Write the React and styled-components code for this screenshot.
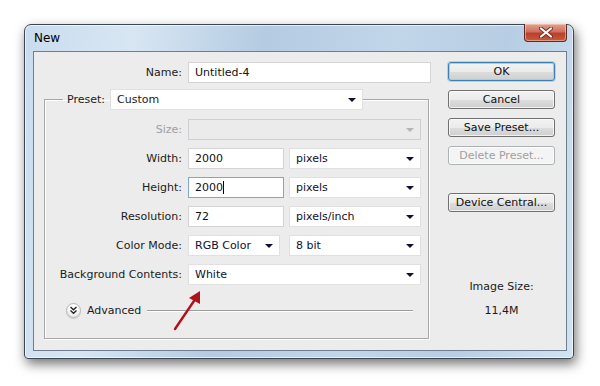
import styled, { createGlobalStyle } from "styled-components";

const GlobalStyle = createGlobalStyle`
    html, body {
        margin: 0;
        padding: 0;
        background: #FFFFFF;
    }
    body {
        font-family: "DejaVu Sans", "Liberation Sans", sans-serif;
        font-size: 11px;
        color: #1b1b1b;
    }
`

function Arrow() {
    return (
        <svg width="10" height="6" viewBox="0 0 10 6">
            <path d="M1 1 L9 1 L5 5 Z" fill="currentColor" />
        </svg>
    )
}

function Select({ value, width, disabled }) {
    return (
        <SelectBox width={width} disabled={disabled}>
            <span>{value}</span>
            <Arrow />
        </SelectBox>
    )
}

function Field({ label, children, disabled }) {
    return (
        <Row>
            <Label disabled={disabled}>{label}</Label>
            {children}
        </Row>
    )
}

export default function App() {
    return (
        <Page>
            <GlobalStyle />
            <Window>
                <TitleBar>
                    <h1>New</h1>
                    <CloseButton>
                        <svg width="14" height="11" viewBox="0 0 14 11">
                            <path d="M2 1.5 L12 9.5 M12 1.5 L2 9.5" stroke="#7a2a20" strokeWidth="4" strokeLinecap="round" />
                            <path d="M2 1.5 L12 9.5 M12 1.5 L2 9.5" stroke="#FFFFFF" strokeWidth="2.2" strokeLinecap="round" />
                        </svg>
                    </CloseButton>
                </TitleBar>

                <Client>
                    <MainColumn>
                        <Row>
                            <Label width={138}>Name:</Label>
                            <Input width={243} last>Untitled-4</Input>
                        </Row>

                        <Group>
                            <Legend>
                                <span>Preset:</span>
                                <Select value="Custom" width={253} />
                            </Legend>
                            <Rows>
                                <Field label="Size:" disabled>
                                    <Select value="" width={233} disabled />
                                </Field>
                                <Field label="Width:">
                                    <Input width={96}>2000</Input>
                                    <Select value="pixels" width={132} />
                                </Field>
                                <Field label="Height:">
                                    <Input width={96} focused>2000<Caret /></Input>
                                    <Select value="pixels" width={132} />
                                </Field>
                                <Field label="Resolution:">
                                    <Input width={96}>72</Input>
                                    <Select value="pixels/inch" width={132} />
                                </Field>
                                <Field label="Color Mode:">
                                    <Select value="RGB Color" width={92} />
                                    <Spacer />
                                    <Select value="8 bit" width={132} />
                                </Field>
                                <Field label="Background Contents:">
                                    <Select value="White" width={233} />
                                </Field>
                            </Rows>
                            <Advanced>
                                <ToggleIcon>
                                    <svg width="9" height="9" viewBox="0 0 9 9">
                                        <path d="M1.5 1 L4.5 3.8 L7.5 1 M1.5 4.5 L4.5 7.3 L7.5 4.5" stroke="#222" strokeWidth="1.4" fill="none" />
                                    </svg>
                                </ToggleIcon>
                                <span>Advanced</span>
                                <Line />
                            </Advanced>
                        </Group>
                    </MainColumn>

                    <SideColumn>
                        <Button primary>OK</Button>
                        <Button>Cancel</Button>
                        <Button>Save Preset...</Button>
                        <Button disabled>Delete Preset...</Button>
                        <Button gap={19}>Device Central...</Button>
                        <ImageSize>
                            <p>Image Size:</p>
                            <p>11,4M</p>
                        </ImageSize>
                    </SideColumn>
                </Client>

                <Pointer width="34" height="44" viewBox="0 0 34 44">
                    <path d="M3 41 L24 10" stroke="#b0121c" strokeWidth="2.4" strokeLinecap="round" />
                    <path d="M28 3 L17 10 L28 16 Z" fill="#b0121c" />
                </Pointer>
            </Window>
        </Page>
    )
}

const Page = styled.div`
    width: 600px;
    height: 386px;
    padding: 24px 0 0 24px;
    box-sizing: border-box;
`

const Window = styled.div`
    position: relative;
    width: 550px;
    height: 335px;
    box-sizing: border-box;
    padding: 0 6px 7px 8px;
    border: 1px solid #3c4650;
    border-radius: 7px 7px 4px 4px;
    background: linear-gradient(100deg, #c9dcee 0%, #d8e6f3 18%, #b4cbe2 40%, #c2d6ea 62%, #b7cde3 80%, #d2e3f2 100%);
    box-shadow: 2px 5px 12px rgba(0, 0, 0, 0.55), inset 0 0 0 1px rgba(255, 255, 255, 0.6);
    display: flex;
    flex-direction: column;
`

const TitleBar = styled.div`
    height: 26px;
    display: flex;
    align-items: flex-start;
    justify-content: space-between;

    h1 {
        margin: 6px 0 0 1px;
        font-family: "DejaVu Sans", sans-serif;
        font-size: 12px;
        font-weight: 400;
        color: #000000;
    }
`

const CloseButton = styled.div`
    width: 41px;
    height: 17px;
    margin-top: -1px;
    border: 1px solid #5b2a22;
    border-top: none;
    border-radius: 0 0 4px 4px;
    background: linear-gradient(#e0a090 0%, #d0705c 45%, #b8412c 55%, #c85a40 100%);
    box-shadow: inset 0 0 0 1px rgba(255, 220, 200, 0.5);
    display: flex;
    align-items: center;
    justify-content: center;
`

const Client = styled.div`
    flex: 1;
    border: 1px solid #6f7e8e;
    background: #ececec;
    padding: 10px 11px 0 10px;
    display: flex;
`

const MainColumn = styled.div`
    width: 387px;
    display: flex;
    flex-direction: column;
`

const Row = styled.div`
    height: 21px;
    display: flex;
    align-items: center;
`

const Label = styled.label`
    width: ${props => props.width || 137}px;
    flex-shrink: 0;
    margin-right: 6px;
    text-align: right;
    color: ${props => props.disabled ? "#a0a0a0" : "#1b1b1b"};
    white-space: nowrap;
`

const Input = styled.div`
    width: ${props => props.width}px;
    height: 21px;
    flex-shrink: 0;
    box-sizing: border-box;
    padding: 0 6px;
    display: flex;
    align-items: center;
    background: #FFFFFF;
    border: 1px solid ${props => props.focused ? "#7ea6cf" : "#d4d4d4"};
    color: #101018;
    margin-right: ${props => props.last ? 0 : 5}px;
`

const Caret = styled.span`
    width: 1px;
    height: 13px;
    background: #000000;
`

const SelectBox = styled.div`
    width: ${props => props.width}px;
    height: 21px;
    flex-shrink: 0;
    box-sizing: border-box;
    padding: 0 5px 0 6px;
    display: flex;
    align-items: center;
    justify-content: space-between;
    background: ${props => props.disabled ? "#ebebeb" : "#FFFFFF"};
    border: 1px solid ${props => props.disabled ? "#cfcfcf" : "#e0e0e0"};
    color: ${props => props.disabled ? "#b4b4b4" : "#101030"};
`

const Spacer = styled.div`
    width: 9px;
    flex-shrink: 0;
`

const Group = styled.fieldset`
    width: 385px;
    box-sizing: border-box;
    margin: 6px 0 0 0;
    padding: 9px 0 19px 0;
    border: 1px solid #a8a8a8;
    box-shadow: inset 1px 1px 0 #FFFFFF, 1px 1px 0 #FFFFFF;
`

const Legend = styled.legend`
    margin-left: 18px;
    padding: 0 0 0 4px;
    height: 21px;
    display: flex;
    align-items: center;
    gap: 5px;

    span {
        color: #1b1b1b;
    }
`

const Rows = styled.div`
    display: flex;
    flex-direction: column;
    gap: 8px;
`

const Advanced = styled.div`
    margin-top: 17px;
    padding-left: 21px;
    height: 17px;
    display: flex;
    align-items: center;
    gap: 6px;
    color: #1b1b1b;
`

const ToggleIcon = styled.div`
    width: 15px;
    height: 15px;
    border-radius: 50%;
    box-sizing: border-box;
    border: 1px solid #b8b8b8;
    background: radial-gradient(circle at 50% 35%, #FFFFFF 30%, #dcdcdc 100%);
    box-shadow: 0 1px 1px rgba(0, 0, 0, 0.15);
    display: flex;
    align-items: center;
    justify-content: center;
`

const Line = styled.div`
    width: 266px;
    height: 1px;
    background: #9c9c9c;
    box-shadow: 0 1px 0 #FFFFFF;
`

const SideColumn = styled.div`
    width: 109px;
    margin-left: 17px;
    display: flex;
    flex-direction: column;
    gap: 9px;
`

const Button = styled.div`
    height: 19px;
    box-sizing: border-box;
    margin-top: ${props => props.gap ? props.gap : 0}px;
    border: 1px solid ${props => props.primary ? "#3c7fb1" : props.disabled ? "#adb2b5" : "#707070"};
    border-radius: 3px;
    background: ${props => props.disabled
        ? "#f4f4f4"
        : "linear-gradient(#f2f2f2 0%, #ebebeb 50%, #dddddd 51%, #cfcfcf 100%)"};
    box-shadow: ${props => props.primary ? "0 0 0 1px #a6d6f3, inset 0 0 0 1px #98d3f2" : "inset 0 0 0 1px rgba(255,255,255,0.7)"};
    color: ${props => props.disabled ? "#a0a0a0" : "#101010"};
    display: flex;
    align-items: center;
    justify-content: center;
    font-size: 11px;
`

const ImageSize = styled.div`
    margin-top: 59px;
    text-align: center;

    p {
        margin: 0 0 11px 0;
        color: #1b1b1b;
    }
`

const Pointer = styled.svg`
    position: absolute;
    left: 147px;
    top: 263px;
`
